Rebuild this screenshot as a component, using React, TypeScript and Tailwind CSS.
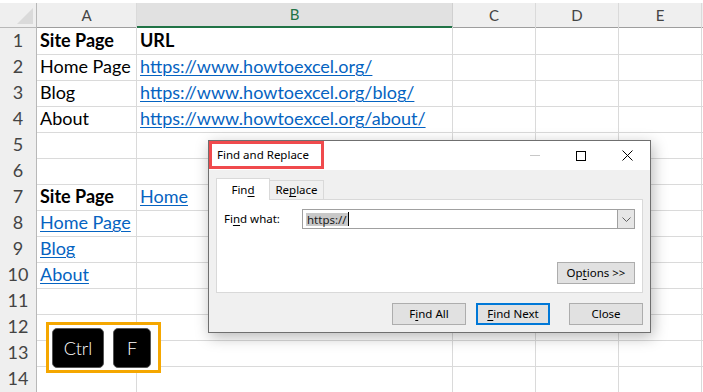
import React from 'react';

// ---------------------------------------------------------------------------
// Sheet data
// ---------------------------------------------------------------------------

type Cell = { text: string; bold?: boolean; link?: boolean };

const COLS = ['A', 'B', 'C', 'D', 'E'];

const CELLS: Record<number, [Cell | null, Cell | null]> = {
  1: [{ text: 'Site Page', bold: true }, { text: 'URL', bold: true }],
  2: [{ text: 'Home Page' }, { text: 'https://www.howtoexcel.org/', link: true }],
  3: [{ text: 'Blog' }, { text: 'https://www.howtoexcel.org/blog/', link: true }],
  4: [{ text: 'About' }, { text: 'https://www.howtoexcel.org/about/', link: true }],
  7: [{ text: 'Site Page', bold: true }, { text: 'Home', link: true }],
  8: [{ text: 'Home Page', link: true }, null],
  9: [{ text: 'Blog', link: true }, null],
  10: [{ text: 'About', link: true }, null],
};

const ROWS = Array.from({ length: 14 }, (_, i) => i + 1);

const GRID = 'grid grid-cols-[37px_100px_316px_83px_83px_83px_1fr]';

function CellText({ cell }: { cell: Cell | null }) {
  if (!cell) return null;
  return (
    <span
      className={[
        'whitespace-nowrap',
        cell.bold ? 'font-bold text-black' : '',
        cell.link ? 'text-[#0563c1] underline decoration-1 underline-offset-2' : 'text-black',
      ].join(' ')}
    >
      {cell.text}
    </span>
  );
}

// ---------------------------------------------------------------------------
// Dialog bits
// ---------------------------------------------------------------------------

function U({ children }: { children: React.ReactNode }) {
  return <span className="underline decoration-1 underline-offset-2">{children}</span>;
}

function DlgButton({ children, primary, className = '' }: { children: React.ReactNode; primary?: boolean; className?: string }) {
  return (
    <button
      type="button"
      className={[
        'flex h-[22px] w-[74px] items-center justify-center bg-[#e1e1e1] text-[11.5px] text-black',
        primary ? 'border-2 border-[#0078d7]' : 'border border-[#adadad]',
        className,
      ].join(' ')}
    >
      {children}
    </button>
  );
}

function FindReplaceDialog() {
  return (
    <div className="absolute left-[208px] top-[140px] flex h-[193px] w-[443px] flex-col border border-[#6f6f6f] bg-[#f0f0f0] font-['Noto_Sans',sans-serif] shadow-[2px_4px_14px_rgba(0,0,0,0.28)]">
      {/* Title bar */}
      <div className="flex h-[29px] items-start justify-between bg-white">
        <div className="flex h-[28px] w-[115px] items-center border-[3px] border-[#f04a4d] pl-[5px] text-[11.5px] text-black">
          Find and Replace
        </div>
        <div className="flex h-[29px]">
          <div className="flex w-[46px] items-center justify-center">
            <span className="block h-px w-[10px] bg-[#c8c8c8]" />
          </div>
          <div className="flex w-[46px] items-center justify-center">
            <span className="block h-[10px] w-[10px] border border-black" />
          </div>
          <div className="flex w-[46px] items-center justify-center">
            <svg width="11" height="11" viewBox="0 0 11 11" aria-hidden>
              <path d="M0.5 0.5L10.5 10.5M10.5 0.5L0.5 10.5" stroke="#000" strokeWidth="1" />
            </svg>
          </div>
        </div>
      </div>

      {/* Body */}
      <div className="flex flex-1 flex-col px-[7px] pt-[8px]">
        <div className="flex items-end">
          <div className="relative z-10 -mb-px flex h-[22px] w-[54px] items-center justify-center border border-b-0 border-[#d9d9d9] bg-white text-[11.5px] text-black">
            Fin<U>d</U>
          </div>
          <div className="flex h-[19px] w-[54px] items-center justify-center border border-b-0 border-l-0 border-[#d9d9d9] text-[11.5px] text-black">
            Re<U>p</U>lace
          </div>
        </div>

        <div className="flex h-[94px] flex-col border border-[#d9d9d9] bg-white px-[7px] pt-[9px]">
          <div className="flex items-center">
            <span className="w-[78px] text-[11.5px] text-black">
              Fi<U>n</U>d what:
            </span>
            <div className="flex h-[20px] flex-1 items-center border border-[#a0a0a0] bg-white">
              <div className="flex flex-1 items-center pl-[3px]">
                <span className="bg-[#c8c8c8] px-px text-[11.5px] leading-[13px] text-[#1a1a1a]">https://</span>
                <span className="block h-[14px] w-px bg-black" />
              </div>
              <div className="flex h-full w-[17px] items-center justify-center border-l border-[#a0a0a0] bg-[#e6e6e6]">
                <svg width="9" height="5" viewBox="0 0 9 5" aria-hidden>
                  <path d="M0.5 0.5L4.5 4.5L8.5 0.5" fill="none" stroke="#606060" strokeWidth="1" />
                </svg>
              </div>
            </div>
          </div>
          <div className="mt-[33px] flex justify-end">
            <DlgButton className="w-[78px]">
              Op<U>t</U>ions &gt;&gt;
            </DlgButton>
          </div>
        </div>

        <div className="mt-[10px] flex justify-end">
          <DlgButton>
            F<U>i</U>nd All
          </DlgButton>
          <DlgButton primary className="ml-[10px]">
            <U>F</U>ind Next
          </DlgButton>
          <DlgButton className="ml-[19px]">Close</DlgButton>
        </div>
      </div>
    </div>
  );
}

function ShortcutKeys() {
  return (
    <div className="absolute left-[46px] top-[322px] flex h-[51px] w-[115px] items-start gap-[9px] border-[3px] border-[#f5a700] bg-white pl-[3px] pt-[3px]">
      <div className="flex h-[40px] w-[52px] items-center justify-center rounded-[5px] border border-[#555] bg-black font-['Lato',sans-serif] text-[18px] font-light text-white">
        Ctrl
      </div>
      <div className="flex h-[40px] w-[38px] items-center justify-center rounded-[5px] border border-[#555] bg-black font-['Lato',sans-serif] text-[18px] font-light text-white">
        F
      </div>
    </div>
  );
}

// ---------------------------------------------------------------------------
// App
// ---------------------------------------------------------------------------

export default function App() {
  return (
    <div className="relative h-[392px] w-[703px] overflow-hidden bg-white font-['Lato',sans-serif]">
      <div className="h-[3px]" />

      {/* Column headers */}
      <div className={`${GRID} h-[24px]`}>
        <div className="relative border-b border-r border-[#b8b8b8] bg-[#efefef]">
          <svg className="absolute right-[3px] bottom-[3px]" width="16" height="16" viewBox="0 0 16 16" aria-hidden>
            <path d="M16 0V16H0Z" fill="#dadada" />
          </svg>
        </div>
        {COLS.map((c) =>
          c === 'B' ? (
            <div
              key={c}
              className="flex items-center justify-center border-b-2 border-r border-b-[#217346] border-r-[#d0d0d0] bg-[#e1e1e1] text-[15px] text-[#217346]"
            >
              {c}
            </div>
          ) : (
            <div
              key={c}
              className="flex items-center justify-center border-b border-r border-b-[#9e9e9e] border-r-[#dadada] bg-[#efefef] text-[15px] text-[#444]"
            >
              {c}
            </div>
          ),
        )}
        <div className="border-b border-[#9e9e9e] bg-[#efefef]" />
      </div>

      {/* Rows */}
      {ROWS.map((r) => {
        const cells = CELLS[r] ?? [null, null];
        return (
          <div key={r} className={`${GRID} h-[26px] text-[18px]`}>
            <div className="flex items-center justify-center border-b border-r border-b-[#dadada] border-r-[#b8b8b8] bg-[#efefef] text-[#444]">
              {r}
            </div>
            <div className="flex items-center border-b border-r border-[#dadada] pl-[3px]">
              <CellText cell={cells[0]} />
            </div>
            <div className="flex items-center border-b border-r border-[#dadada] pl-[3px]">
              <CellText cell={cells[1]} />
            </div>
            <div className="border-b border-r border-[#dadada]" />
            <div className="border-b border-r border-[#dadada]" />
            <div className="border-b border-r border-[#dadada]" />
            <div className="border-b border-[#dadada]" />
          </div>
        );
      })}

      <FindReplaceDialog />
      <ShortcutKeys />
    </div>
  );
}
